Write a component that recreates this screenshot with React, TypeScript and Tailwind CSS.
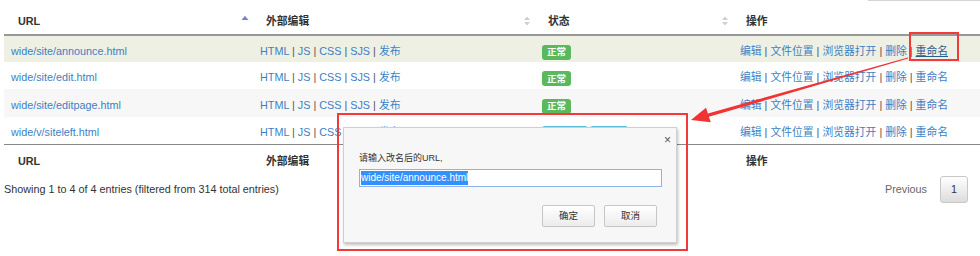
import React from "react";

type Row = { url: string; status: "ok" | "two"; bg: string; h: string; hot?: boolean };

const rows: Row[] = [
  { url: "wide/site/announce.html", status: "ok", bg: "bg-[#eef0e4]", h: "h-[27px]", hot: true },
  { url: "wide/site/edit.html", status: "ok", bg: "bg-white", h: "h-[27px]" },
  { url: "wide/site/editpage.html", status: "ok", bg: "bg-[#f7f7f7]", h: "h-[28px]" },
  { url: "wide/v/siteleft.html", status: "two", bg: "bg-white", h: "h-[27px]" },
];

const Sep = () => <span className="text-[#555]"> | </span>;

function SortIcon({ mode }: { mode: "asc" | "both" | "none" }) {
  if (mode === "none") return null;
  if (mode === "asc")
    return (
      <svg width="8" height="14" viewBox="0 0 8 14">
        <path d="M0.5 6 L4 1.8 L7.5 6 Z" fill="#7f80d4" />
      </svg>
    );
  return (
    <svg width="8" height="14" viewBox="0 0 8 14">
      <path d="M1 6 L4 2.5 L7 6 Z" fill="#cfcfcf" />
      <path d="M1 8 L4 11.5 L7 8 Z" fill="#cfcfcf" />
    </svg>
  );
}

function Links({ items, hotLast }: { items: string[]; hotLast?: boolean }) {
  return (
    <span>
      {items.map((it, i) => (
        <React.Fragment key={it}>
          {i > 0 && <Sep />}
          <a
            className={
              hotLast && i === items.length - 1
                ? "text-[#2a5d8f] underline"
                : "text-[#3c7fc4]"
            }
          >
            {it}
          </a>
        </React.Fragment>
      ))}
    </span>
  );
}

export default function App() {
  const heads: { label: string; sort: "asc" | "both" | "none" }[] = [
    { label: "URL", sort: "asc" },
    { label: "外部编辑", sort: "both" },
    { label: "状态", sort: "both" },
    { label: "操作", sort: "none" },
  ];

  const td = "px-[7px] pt-[3px] pb-0 align-middle";

  return (
    <div className="relative w-[980px] h-[256px] overflow-hidden bg-white text-[10.8px] leading-[14px] text-[#333] font-['Liberation_Sans','Noto_Sans_CJK_SC',sans-serif]">
      {/* search box edge */}
      <div className="flex h-px justify-end">
        <div className="w-[112px] bg-[#d4d4d4]" />
      </div>

      <table className="ml-[4px] w-[976px] table-fixed border-collapse">
        <colgroup>
          <col className="w-[249px]" />
          <col className="w-[282px]" />
          <col className="w-[198px]" />
          <col className="w-[247px]" />
        </colgroup>
        <thead>
          <tr>
            {heads.map((h, i) => (
              <th
                key={h.label}
                className={`h-[33px] border-b-2 border-[#999] pt-[13px] pb-[6px] pr-[4px] text-left font-bold ${
                  i === 0 ? "pl-[14px]" : "pl-[13px]"
                }`}
              >
                <div className="flex h-[14px] items-center justify-between">
                  <span>{h.label}</span>
                  <SortIcon mode={h.sort} />
                </div>
              </th>
            ))}
          </tr>
        </thead>
        <tbody>
          {rows.map((r) => (
            <tr key={r.url} className={`${r.h} ${r.bg}`}>
              <td className={td}>
                <a className="text-[#3c7fc4]">{r.url}</a>
              </td>
              <td className={td}>
                <Links items={["HTML", "JS", "CSS", "SJS", "发布"]} />
              </td>
              <td className={td}>
                {r.status === "ok" ? (
                  <div className="flex pt-[3px]">
                    <span className="flex h-[15px] w-[29px] items-center justify-center rounded-[3px] bg-[#5cb85c] text-[9.5px] font-bold text-white">
                      正常
                    </span>
                  </div>
                ) : (
                  <div className="flex gap-[2px] pt-[4px]">
                    <span className="flex h-[15px] w-[46px] items-center justify-center rounded-[3px] bg-[#5bc0de] text-[9.5px] font-bold text-white">
                      编辑中
                    </span>
                    <span className="flex h-[15px] w-[38px] items-center justify-center rounded-[3px] bg-[#5bc0de] text-[9.5px] font-bold text-white">
                      锁定
                    </span>
                  </div>
                )}
              </td>
              <td className={td}>
                <Links
                  items={["编辑", "文件位置", "浏览器打开", "删除", "重命名"]}
                  hotLast={r.hot}
                />
              </td>
            </tr>
          ))}
        </tbody>
        <tfoot>
          <tr>
            {heads.map((h, i) => (
              <th
                key={h.label}
                className={`border-t border-[#888] pt-[9px] pb-[8px] text-left font-bold ${
                  i === 0 ? "pl-[14px]" : "pl-[13px]"
                }`}
              >
                {h.label}
              </th>
            ))}
          </tr>
        </tfoot>
      </table>

      <div className="flex h-[27px] items-center justify-between pl-[4px] pr-[12px]">
        <span>Showing 1 to 4 of 4 entries (filtered from 314 total entries)</span>
        <div className="flex items-center gap-[13px]">
          <span className="text-[#666]">Previous</span>
          <span className="flex h-[27px] w-[28px] items-center justify-center rounded-[3px] border border-[#c8c8c8] bg-gradient-to-b from-white to-[#dcdcdc] text-[#333]">
            1
          </span>
        </div>
      </div>

      {/* rename dialog */}
      <div className="absolute left-[343px] top-[127px] h-[116px] w-[334px] border border-[#cfcfcf] bg-[#f7f7f7] shadow-[1px_2px_3px_rgba(0,0,0,0.25)]">
        <div className="flex flex-col px-[15px]">
          <div className="-mr-[10px] flex h-[22px] justify-end pt-[5px]">
            <span className="text-[12px] leading-[14px] text-[#555]">×</span>
          </div>
          <div className="mt-[2px] text-[9px] leading-[12px] text-[#333]">请输入改名后的URL,</div>
          <div className="mt-[5px] flex h-[18px] w-[303px] items-center border border-[#8fb3e8] bg-white pl-[1px]">
            <span className="bg-[#3390ff] text-[10px] leading-[14px] text-white">
              wide/site/announce.html
            </span>
          </div>
          <div className="mt-[18px] flex justify-end gap-[9px] pr-[4px]">
            <button className="h-[22px] w-[53px] rounded-[2px] border border-[#c6c6c6] bg-gradient-to-b from-white to-[#ececec] text-[9.5px] text-[#333]">
              确定
            </button>
            <button className="h-[22px] w-[53px] rounded-[2px] border border-[#c6c6c6] bg-gradient-to-b from-white to-[#ececec] text-[9.5px] text-[#333]">
              取消
            </button>
          </div>
        </div>
      </div>

      {/* annotation boxes */}
      <div className="absolute left-[337px] top-[113px] h-[138px] w-[351px] border-2 border-[#f23a3a]" />
      <div className="absolute left-[909px] top-[32px] h-[29px] w-[50px] border-2 border-[#f23a3a]" />

      {/* annotation arrow */}
      <svg className="pointer-events-none absolute left-0 top-0" width="980" height="256">
        <polygon
          points="907.9,57.6 707.9,113.4 706.0,107.8 691,120 710.8,122.3 708.9,116.8 908.1,58.6"
          fill="#f03333"
        />
      </svg>
    </div>
  );
}
